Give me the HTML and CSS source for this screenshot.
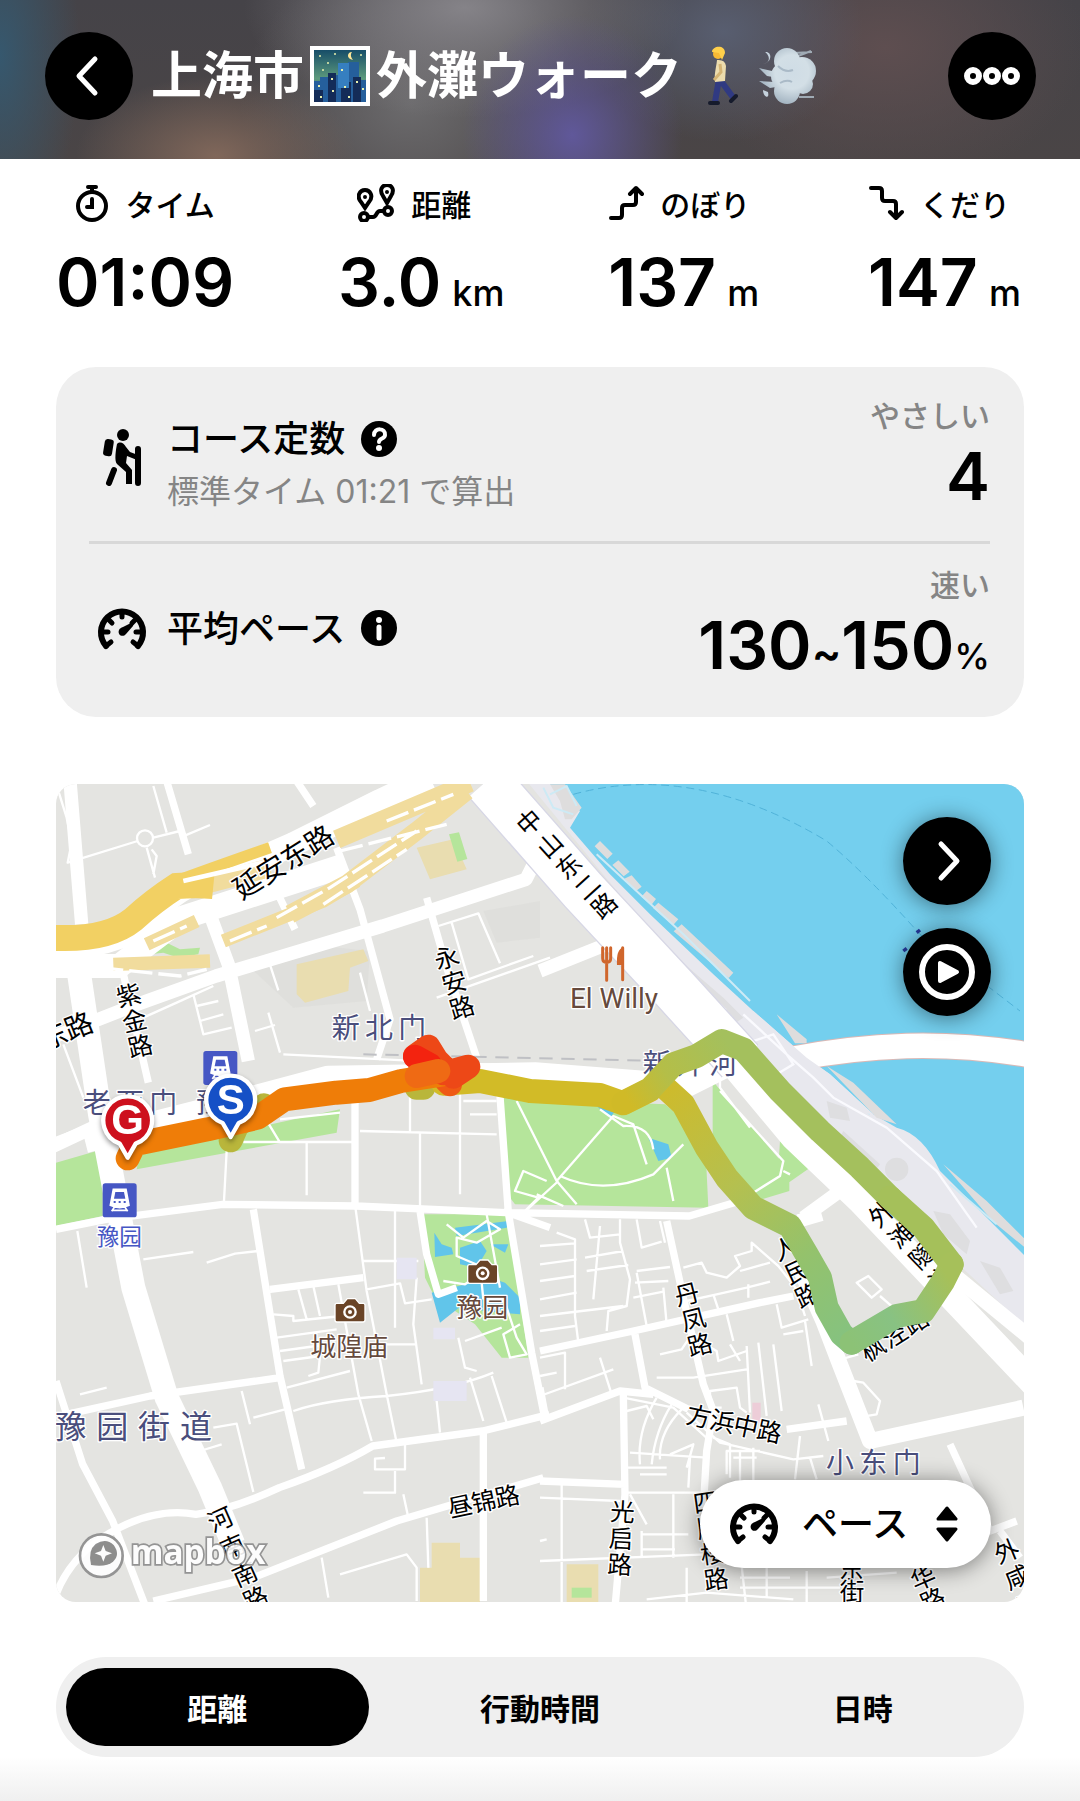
FILE: index.html
```html
<!DOCTYPE html>
<html lang="ja">
<head>
<meta charset="utf-8">
<meta name="viewport" content="width=device-width, initial-scale=1">
<title>上海市外灘ウォーク</title>
<link rel="stylesheet" href="styles.css">
</head>
<body>
<svg class="defs" width="0" height="0" aria-hidden="true">
  <defs>
    <symbol id="gauge" viewBox="0 0 50 44">
      <path d="M9 39A21 21 0 1 1 41 39" fill="none" stroke="currentColor" stroke-width="6" stroke-linecap="round"/>
      <path d="M25 5v5M11 12l4 4M39 12l-4 4M4 25h7M46 25h-7M9 39l5-4M41 39l-5-4" stroke="currentColor" stroke-width="5" stroke-linecap="round"/>
      <path d="M34 16c2-1 3 1 2 3l-7 8c-3 4-9 1-7-4 1-2 2-2 4-3z" fill="currentColor"/>
    </symbol>
  </defs>
</svg>

<header class="hero">
  <button class="round" type="button" aria-label="戻る">
    <svg width="88" height="88" viewBox="0 0 88 88"><path d="M50 27L34 44l16 17" fill="none" stroke="#fff" stroke-width="5" stroke-linecap="round" stroke-linejoin="round"/></svg>
  </button>
  <h1 class="title">
    <span>上海市</span>
    <svg class="night" width="60" height="60" viewBox="0 0 60 60" role="img" aria-label="夜景">
      <defs><linearGradient id="sky" x2="0" y2="1"><stop offset="0" stop-color="#164d68"/><stop offset=".55" stop-color="#5d9a7c"/><stop offset="1" stop-color="#1b3f63"/></linearGradient></defs>
      <path d="M0 0h60v60H0z" fill="#fff"/><path d="M4 4h52v52H4z" fill="url(#sky)"/>
      <path d="M4 35h6v-4h9v-2h9v9h7v-8h3V16h11v18h7v22H4z" fill="#255f9c"/>
      <path d="M18 27h8v29h-8zM31 36h10v20H31zM43 31h8v25h-8zM4 44h9v12H4z" fill="#142c58"/>
      <path d="M28 17h11v25H28z" fill="#367fc0"/>
      <path d="M42 6c-5 0-6 7 1 8-2-3-3-5-1-8z" fill="#ffe89a"/>
      <g fill="#e9f2ae"><circle cx="10" cy="10" r="1"/><circle cx="18" cy="17" r="1"/><circle cx="25" cy="8" r="1"/><circle cx="51" cy="9" r="1"/><circle cx="13" cy="24" r="1"/><path d="M21 32h2v2h-2zM8 39h2v2H8zM34 40h2v2h-2zM46 35h2v2h-2zM52 42h2v2h-2zM22 44h2v2h-2zM38 50h2v2h-2zM10 50h2v2h-2zM31 23h2v2h-2z"/></g>
    </svg>
    <span>外灘ウォーク</span>
    <svg class="walker" width="32" height="60" viewBox="0 0 32 60" role="img" aria-label="歩く人">
      <path d="M13 33l-4 23M15 35l11 15" stroke="#303a82" stroke-width="6" stroke-linecap="round" fill="none"/>
      <path d="M4 57h8M25 55l5-5" stroke="#161b2c" stroke-width="4" stroke-linecap="round"/>
      <path d="M11 14q8-1 9 6l-1 15-10 1c-1-8 1-13 2-22z" fill="#ecdcad"/>
      <path d="M14 18l1 8-7 8" stroke="#d4b474" stroke-width="3" fill="none"/>
      <circle cx="12" cy="8" r="5" fill="#f7b934"/><path d="M6 6c0-6 13-8 13 1l-3 7-3-7z" fill="#ffd04b"/>
    </svg>
    <svg class="gust" width="60" height="60" viewBox="0 0 60 60" role="img" aria-label="ダッシュ">
      <defs><radialGradient id="cloud" gradientUnits="userSpaceOnUse" cx="34" cy="26" r="34"><stop offset="0" stop-color="#cfdce5"/><stop offset=".5" stop-color="#d3dfe6"/><stop offset="1" stop-color="#9fb0be"/></radialGradient></defs>
      <path d="M36 7l18-1M40 10l13-5M41 51h15" stroke="#a0abb5" stroke-width="2"/>
      <g fill="url(#cloud)"><circle cx="29" cy="15" r="13"/><circle cx="44" cy="25" r="14"/><circle cx="29" cy="45" r="13"/><circle cx="27" cy="30" r="14"/><circle cx="45" cy="38" r="10"/><path d="M14 25L1 22l8 8 6 1M17 36L1 35l11 7 6-1"/></g>
      <path d="M5 18c9-2 6-9 2-12 7-1 8 10-2 12zM5 44c0 7 7 10 5 2z" fill="#c5d2dd"/>
      <path d="M20 20q7 7 15 4M22 37q7-4 12-1" fill="none" stroke="#aabac7" stroke-width="2"/>
    </svg>
  </h1>
  <button class="round" type="button" aria-label="メニュー">
    <svg width="88" height="88" viewBox="0 0 88 88" fill="none" stroke="#fff" stroke-width="6"><circle cx="25" cy="44" r="6"/><circle cx="44" cy="44" r="6"/><circle cx="63" cy="44" r="6"/></svg>
  </button>
</header>

<main class="page">
  <dl class="stats">
    <div class="stat">
      <dt><svg width="34" height="38" viewBox="0 0 34 38" fill="none" stroke="currentColor" stroke-width="4" stroke-linecap="round"><circle cx="17" cy="22" r="14"/><path d="M17 8V3M13 3h8M17 15v8h-5"/></svg>タイム</dt>
      <dd>01:09</dd>
    </div>
    <div class="stat">
      <dt><svg width="38" height="38" viewBox="0 0 38 38" fill="none" stroke="currentColor" stroke-width="4"><path d="M8 24l-4-6c-5-6-1-12 4-12s9 6 4 12zM30 19l-4-7c-4-6-1-11 4-11s8 5 4 11z"/><circle cx="8" cy="13" r="1" stroke-width="2"/><circle cx="30" cy="8" r="1" stroke-width="2"/><circle cx="7" cy="33" r="4"/><circle cx="31" cy="27" r="4"/><path d="M11 33h5c4 0 3-6 7-6h4"/></svg>距離</dt>
      <dd>3.0<small>km</small></dd>
    </div>
    <div class="stat">
      <dt><svg width="36" height="38" viewBox="0 0 36 38" fill="none" stroke="currentColor" stroke-width="4" stroke-linecap="round" stroke-linejoin="round"><path d="M3 34h8q3 0 3-3v-7q0-3 3-3h8q3 0 3-3V5M22 10l6-6 6 6"/></svg>のぼり</dt>
      <dd>137<small>m</small></dd>
    </div>
    <div class="stat">
      <dt><svg width="36" height="38" viewBox="0 0 36 38" fill="none" stroke="currentColor" stroke-width="4" stroke-linecap="round" stroke-linejoin="round"><path d="M3 4h8q3 0 3 3v7q0 3 3 3h8q3 0 3 3v13M22 28l6 6 6-6"/></svg>くだり</dt>
      <dd>147<small>m</small></dd>
    </div>
  </dl>

  <section class="card">
    <div class="metric course">
      <svg class="metric-icon" width="50" height="58" viewBox="0 0 50 58">
        <circle cx="26" cy="7" r="6"/><rect x="7" y="11" width="9" height="17" rx="3" transform="rotate(9 11 19)"/>
        <path d="M20 16c3-3 7-1 9 3l4 5 8 3-1 5-10-4-1 7 6 7v14h-6V44l-9-8c-3-3-1-15 0-20z"/>
        <path d="M17 42l-5 13M41 21v34" stroke="#000" stroke-width="6" stroke-linecap="round"/>
      </svg>
      <div class="metric-name">
        <h2>コース定数 <button class="info" type="button" aria-label="コース定数の説明"><svg width="37" height="37" viewBox="0 0 37 37"><circle cx="18" cy="18" r="18"/><path d="M13 14c0-8 12-7 11 0 0 4-6 3-6 7" fill="none" stroke="#fff" stroke-width="4" stroke-linecap="round"/><circle cx="18" cy="27" r="3" fill="#fff"/></svg></button></h2>
        <p>標準タイム 01:21 で算出</p>
      </div>
      <div class="metric-value"><span>やさしい</span><strong>4</strong></div>
    </div>
    <div class="metric average">
      <svg class="metric-icon" width="50" height="44"><use href="#gauge"/></svg>
      <div class="metric-name">
        <h2>平均ペース <button class="info" type="button" aria-label="平均ペースの説明"><svg width="37" height="37" viewBox="0 0 37 37"><circle cx="18" cy="18" r="18"/><circle cx="18" cy="10" r="3" fill="#fff"/><path d="M18 17v11" stroke="#fff" stroke-width="5" stroke-linecap="round"/></svg></button></h2>
      </div>
      <div class="metric-value"><span>速い</span><strong>130<i>~</i>150<small>%</small></strong></div>
    </div>
  </section>

  <section class="map" aria-label="地図">
    <svg class="map-art" viewBox="18 9 2904 2454">
      <path class="land" d="M0 0h2940v2480H0z"/>
      <!-- blocks and parks -->
      <g fill="#dcdcd8" opacity=".6"><path d="M1300 390l170-30v110l-130 15zM600 560l170-70 190 20-10 150-220 20z"/></g>
      <g fill="#e9ddb0"><path d="M740 550l200-45 15 35-55 20-5 70-130 35-25-25zM1100 200l110-25 40 90-110 30z"/><path d="M1145 2285h85v45h60v140h-180v-110h35zM1550 2350h95v120h-95z"/></g>
      <g class="park">
        <path d="M18 1145l140-40v200l-140 30zM270 1115l600-130-10 70-600 110zM1355 940l250 20 240 10 120 100 10 210-580-10-30-40zM1988 900l230 270v60l-100 30-130-150zM2190 1080l90 80-100 70z"/>
        <path d="M1115 1300h260l60 430h-80l-80-100-120-80-30-60zM1197 160l30-6 25 80-30 8zM290 490l60-5 40 20 60-5-5 20-60 10-45-15-40 5z"/><path d="M1565 2420h60v30h-60z"/>
      </g>
      <g fill="#61c5ea"><path d="M1153 1355l22 35 30 10 5 20-55 8zM1215 1340l160-20-5 20-150 25zM1230 1400l60-20 20 30-30 50-50-10zM1145 1535l120-30 40-20 60 20 45 45v50l-110-10-60-20-70 55zM1795 1070l60 20 10 40-40 10zM1640 975l60 10-20 25zM1320 1390l55 0-10 25z"/></g>
      <path d="M2107 1865h25v60h-25z" fill="#edcdd8"/>
      <!-- river and bank -->
      <path d="M1430 0l170 0 1340 1410v240L2200 960l-360-460z" fill="#e8e8ee"/>
      <path class="water" d="M1490 0L1590 90 1560 140 1680 280 1800 400 1990 580 2110 690 2270 830 2340 880 2470 1000 2540 1040Q2620 1060 2670 1170L2760 1260 2830 1330 2940 1440V0z"/>
      <g fill="#dedddd"><path d="M1500 10l30 50 15 55 20 0 30-35-50-70zM1650 180l38 38-16 16-38-38zM1705 238l34 34-18 14-34-34zM1745 283l30 34-18 14-34-38zM1790 330l28 24-14 18-30-25zM1825 365l60 50-16 18-60-52zM1895 430l155 145-14 16-165-140zM2180 700l90 75v12h-35zM2330 855l80 50 130 125-60-20zM2680 1150l130 110 120 120v24l-100-82z"/></g>
      <path d="M1480 20l30 60 60 20M1500 40l50-25 30 60M1640 220l260 240 200 200M2310 870l150 130M2700 1210l140 120" stroke="#cdeaf5" stroke-width="6" fill="none"/>
      <path d="M1570 40q360-100 760 140 120 100 280 280l300 230" fill="none" stroke="#50b2d8" stroke-width="3" stroke-dasharray="24 14"/>
      <path d="M2600 455l10-8M2560 510l10-8" stroke="#263a9c" stroke-width="10"/>
      <path d="M2220 835Q2400 800 2570 795 2750 790 2940 822" stroke="#dab9b6" stroke-width="80" fill="none"/>
      <path d="M2220 835Q2400 800 2570 795 2750 790 2940 822" stroke="#fff" stroke-width="74" fill="none"/>
      <path d="M2110 690l160 140 70 50 130 120-80-10-160-110-150-110z" fill="#e8e8ee"/>
      <g fill="#dedee0"><path d="M1800 460l220 190 60 60-30 20-220-190zM2330 960l60 20 10 40-60-10z"/><path d="M2380 1050l110 100-30 40-100-100z"/><circle cx="2540" cy="1165" r="35"/><path d="M2650 1290l50 10 60 80-10 40-70-60zM2790 1440l60 20 40 70-40 10z"/></g>
      <path d="M2080 700l130 120 80 70 60 60 160 90 150 130 120 170M2010 670l15 15-30 30M2080 790l90-30 60 90-50 30" fill="none" stroke="#fafafe" stroke-width="7"/>
      <!-- minor streets -->
      <g class="minor">
        <path d="M22 20l28 90 15 75-12 60 210-65M310 15l40 140M305 205l15 20-10 55M290 200l25 90M390 170l90-38M310 170l80-20"/><circle cx="285" cy="172" r="24"/>
        <path d="M590 570l115-35M650 520l35 108M615 750l60-18M655 695l35 120M930 575l30 115M1165 435l120-38 65 150M1205 425l50 170 195-70M1160 650l340-120M430 640l30 120 85-20M440 675l65-15M450 720l70-20M280 710l100-45 110-50M40 790l60 160"/>
        <path d="M18 1070l130-50M630 985l60 100M580 1083h335M770 1083v160M530 1110l-8 150M1080 940v115M1110 1055v220M1230 930v310M930 1050l410 10M1240 960h100M1260 1000h80M690 1015l180-20M700 820l800 40"/>
        <path d="M1400 960l120 240 60 70M1525 1200l-120 110 60-60-70-20 25-60 70 30M1520 1200l170-195 60 25 40 120M1530 1185q130 60 280-5l90-90M1460 1240l80 35M1850 1160l20 100M1650 985l70 50q80-5 90 70"/>
        <path d="M2010 930l190 210-10 45-80 50M2010 880v40l90 120M2200 1170l20 10"/>
        <path d="M82 1350l28 170M280 1435l150-22M470 1445l85-27 70-8M90 1840l80-20"/>
        <path d="M670 1600l60 5v15l145-15M745 1525l25 90M790 1515l20 90M865 1510l20 110 40 220 40 140M680 1670l180-25M690 1710l130-18M700 1740l110-15-5 50-30 10M710 1820l190-50M730 1890q100-35 280-45 200-20 320-70M915 1270l35 260 60 310 30 145M1035 1290v350M1100 1490l-10 140 25 180M940 1440h165M950 1525l100-18 15 60 80-12M1000 1690h100M1225 1670l20 90 35 10M1260 1790l40 130M1245 1680l110-40M1325 1785l45 140M1160 1860l10 95"/>
        <path d="M575 1830l25 100M610 1910l95-25M490 1940l70-12 50 205M450 2010l65-20M1065 1980v85h-90v-32l30-2M1035 2070v65h-95M1060 2140l15 70M1130 2210l5 150M870 2380l200-60 30 40v100M815 2330l20 120"/>
        <path d="M1190 1330l50 40 70-50 40 25-70 40-60-15v55l70 30 10 100M1180 1500l65 10 60-40M1310 1300l40 220M1360 1550l40 120 30 50-50 10-20-70 50-30"/>
      </g>
      <g class="minor" transform="translate(1470 1230)">
        <path d="M50 125l55 20v230l10 80M135 85l15 55 90-10M135 200l115-20M140 240l125-18M180 105l-20 220M240 85v70l30 110-10 80-55 15-5 60M290 85l15 85 60-18M290 240l100-12M285 275l100-5M280 320l90-18M360 90l15 65M0 165l105-8M0 220l110-15M0 270l105-15M0 325l110-20M0 375l250-30M0 420l105-15"/>
        <path d="M430 230l55-15 15 30 60 15 40-35-15-30 50-15 0-25 80 70 55 70 25 80M600 240l90-25M440 330l90-20 90-20 70-18M520 310l20 60M625 280v40M370 290l10 110M290 245l30 160M560 370l20 80M0 500l75-15v110M0 555l50-10M0 615l220-80M180 500l35 110M360 490l65-15 20-30 50 5M470 445l60 35 5 30 85-30M350 560h110l160-25M545 650h-35v-50l80-10 10 60 20 15M620 465l10 200M655 455l25 220M700 460l25 200M570 460l30 50M710 340l15 70 80-25M730 430l60-10M795 390l20 135M885 510l70-20M925 640l15-70 30 5 50 55-10 40-60 10M835 640l30 110"/>
        <path d="M250 620l150 30 110 100M260 660l60-15 20 40M350 620q-60 100-50 200M395 640q-50 80-60 180M425 655q-70 70-65 150M270 785l230 15M440 665l100 90 220 50 90-10M520 740l50 20v100M560 850v-70h100M600 780v110M640 770v100M580 800h70M780 735l-15 130M810 800l20 65M260 830h120M300 850h80M390 790l70-30-20 70M450 800l-5 90M260 905h360M65 880v380M270 910l50 90M0 920l240 10M400 910v190M305 1030h140M305 1075h100M305 1020v80M0 1050l20-5M0 1110l500-20M440 1130v120M600 1080l20 180M600 1160h150M600 1190h300M680 1110v110M800 1140v110M860 1160l210-15M320 1225l180-20 260 20"/>
        <path d="M985 255l40 40-30 25-45-45zM1020 315l40 35"/>
      </g>
      <!-- main streets -->
      <g class="road r20">
        <path d="M350 0l65 220M740 0l50 75M670 310l65 135M860 200l70 185 90 330-40 120M1130 350l60 210 90 270M210 535l85 370"/>
        <path d="M915 965v300M18 1345l150-30 350-45 400 5 450 20 550 10 170-50M1350 945l25 350 70 420 40 200M610 1285l80 500 65 280M50 1900l250-55 390-55M18 1800l80 250 90 170 100 260M18 2440q50-130 190-200 120-60 230-40 110-15 250-80 170-60 280-125l330-45 200-50M1300 1950v510M310 2460l300-70 430-170 440-130M660 1525l280-35M1500 1340l-140-50M1110 1290l20 130 35 120 55-20"/>
      </g>
      <g class="road r20" transform="translate(1470 1230)"><path d="M380 90l50 230 60 260 30 80-20 120-10 170M0 480l280-60 380-85 100-20M285 430l30 160 130 65M0 690l240-90 100 10M250 610l5 300-30 340M0 870l255 10M0 590l15 80M740 715l180-25M1230 760l120 260 80-30M1380 1020l60 80"/></g>
      <g class="road r36">
        <path d="M18 765l230-90 250-90 500-150 430-140 40-80M465 360l70 190 60 290M60 0l35 430M0 1100l150-70"/>
        <path d="M2260 1310l110-80 70-50M2245 1320l70-20M1470 570l250-100"/>
      </g>
      <g class="road r64">
        <path d="M18 555l190 0 90-70 100-75 480-155"/>
        <path d="M0 500q180 0 280-70 80-100 190-140 80-20 260-100l260-130 150-70"/>
        <path d="M80 530l70 470 50 260 50 260 100 330 130 270 70 170"/>
        <path d="M105 1080l430-110 300-80 620-10 450 35 220-110"/>
      </g>
      <g class="road r48" transform="translate(1470 1230)"><path d="M770 210l80 180 50 130 90 230 460-100"/></g>
      <path d="M1310 0l290 330 270 290 200 220" stroke="#d7d7e5" stroke-width="148" fill="none"/>
      <path d="M1310 0l290 330 270 290 200 220" stroke="#fff" stroke-width="140" fill="none"/>
      <path d="M2030 830l200 240 200 190 540 570" stroke="#fff" stroke-width="76" fill="none"/>
      <path d="M2660 1440l280 230" stroke="#fff" stroke-width="46"/>
      <path d="M940 820l900 20" stroke="#bfc0c4" stroke-width="6" stroke-dasharray="40 26"/>
      <!-- express road -->
      <g fill="none">
        <path d="M190 550l290-10M290 490l150-70M520 480l300-120 100-60" stroke="#f1dc9d" stroke-width="40"/>
        <path d="M860 175l260-110 140-60M720 400l170-90 210-160 150-120M470 310l190-50" stroke="#f1dc9d" stroke-width="56"/>
        <path d="M150 560l240 25 80-20M310 480l100-45M540 480l110-45M680 410l160-90 260-170M820 370l250-165M1010 120l200-80M870 210l320-80M510 380l120-35" stroke="#fff" stroke-width="10" stroke-dasharray="70 18"/>
        <path d="M0 470q140 5 220-40 90-60 160-130 80-30 280-100" stroke="#f2d063" stroke-width="34"/>
        <path d="M0 470q170 10 250-55 60-55 130-100 60-5 110 0" stroke="#f2d063" stroke-width="78"/>
        <path d="M400 300l260-60" stroke="#fff" stroke-width="14"/>
      </g>
      <g fill="#e6e5f2"><path d="M1040 1430h60v65h-60zM1150 1640h65v35h-65zM1150 1800h100v60h-100z"/></g>

      <!-- street names -->
      <g class="street">
        <text class="wide" transform="translate(574 358) rotate(-32)" x="0 84 168 252" y="0">延安东路</text>
        <text class="wide" transform="translate(18 795) rotate(-22)" x="-38 44" y="0">东路</text>
        <text class="stack" transform="translate(242 670) rotate(-13)" x="0 0 0" y="0 78 156">紫金路</text>
        <text class="stack" transform="translate(1198 556) rotate(-17)" x="0 0 0" y="0 78 156">永安路</text>
        <text class="stack" transform="translate(1456 144) rotate(-42)" x="0 0 0 0 0" y="0 92 178 260 336">中山东二路</text>
        <text class="stack" transform="translate(1918 1566) rotate(-14)" x="0 0 0" y="0 78 156">丹凤路</text>
        <text class="stack" transform="translate(2218 1426) rotate(-25)" x="0 0 0" y="0 78 156">人民路</text>
        <text class="stack" transform="translate(2512 1318) rotate(-44)" x="0 0 0 0" y="0 88 176 264">外滩隧道</text>
        <text transform="translate(2452 1745) rotate(-32)" x="0 76 152" y="0">枫泾路</text>
        <text transform="translate(1905 1925) rotate(12)" x="0 72 144 216" y="0">方浜中路</text>
        <text transform="translate(1200 2210) rotate(-12)" x="0 72 144" y="0">昼锦路</text>
        <text class="stack" transform="translate(1716 2220) rotate(3)" x="0 0 0" y="0 80 158">光启路</text>
        <text class="stack" transform="translate(522 2240) rotate(-24)" x="0 0 0 0" y="0 90 180 260">河南南路</text>
        <text class="stack" transform="translate(1970 2190) rotate(-8)" x="0 0 0 0" y="0 78 156 234">四牌楼路</text>
        <text class="stack" x="2404 2406" y="2392 2460">东街</text>
        <text class="stack" transform="translate(2630 2416) rotate(-24)" x="0 0" y="0 72">华路</text>
        <text class="stack" transform="translate(2880 2336) rotate(-22)" x="0 0 0" y="0 84 168">外咸瓜</text>
      </g>
      <g class="district">
        <text x="887 987 1087" y="772">新北门</text>
        <text x="140 240 340" y="995">老西门</text>
        <text x="480 565" y="995">豫园</text>
        <text x="1820 1920 2020" y="880">新开河</text>
        <text x="2370 2470 2570" y="2075">小东门</text>
        <text class="large" x="62 187 312 438" y="1972">豫园街道</text>
      </g>
      <!-- stations and places -->
      <g id="stations">
        <g id="station" transform="translate(460 810)"><rect width="102" height="102" rx="8" fill="#4657c4"/><path d="M32 18h38l9 48q-28 14-56 0zM27 84l8-12M75 84l-8-12M30 81h42" fill="#fff" stroke="#fff" stroke-width="5"/><path d="M38 26h26l4 20H34z" fill="#4657c4"/><path d="M33 56h6M48 56h6M63 56h6" stroke="#4657c4" stroke-width="6"/></g>
        <use href="#station" x="-302" y="397"/>
      </g>
      <text class="poi blue" x="208" y="1392">豫园</text>
      <g id="camera" transform="translate(855 1555)"><path d="M5 12h20l12-14h24l12 14h12q5 0 5 6v44q0 6-6 6H6q-6 0-6-6V18q0-6 5-6z" fill="#6a4427" stroke="#fff" stroke-width="4"/><circle cx="45" cy="38" r="17" fill="#6a4427" stroke="#fff" stroke-width="7"/><circle cx="45" cy="38" r="6" fill="#fff"/></g>
      <use href="#camera" x="398" y="-116"/>
      <text class="poi" x="898" y="1724">城隍庙</text>
      <text class="poi" x="1297" y="1609">豫园</text>
      <path d="M1658 500v32q0 12 12 12v54M1682 500v32q0 12-12 12M1670 500v44M1718 500v96" fill="none" stroke="#d0662c" stroke-width="9" stroke-linecap="round"/><path d="M1721 498v54h-20q-3-48 20-54z" fill="#d0662c"/>
      <text class="poi latin" x="1692" y="680">El Willy</text>
      <!-- recorded track -->
      <defs>
        <linearGradient id="loop" gradientUnits="userSpaceOnUse" x1="1800" y1="900" x2="2420" y2="1680"><stop offset="0" stop-color="#d1ba27"/><stop offset=".4" stop-color="#b5c04f"/><stop offset=".7" stop-color="#94c26c"/><stop offset="1" stop-color="#84c281"/></linearGradient>
        <linearGradient id="east" gradientUnits="userSpaceOnUse" x1="1730" y1="950" x2="2030" y2="780"><stop offset="0" stop-color="#d0ba27"/><stop offset=".4" stop-color="#b4be48"/><stop offset="1" stop-color="#a4c05d"/></linearGradient>
        <linearGradient id="south" gradientUnits="userSpaceOnUse" x1="2700" y1="1500" x2="2400" y2="1680"><stop offset="0" stop-color="#a6c05a"/><stop offset=".6" stop-color="#88c283"/><stop offset="1" stop-color="#8cc276"/></linearGradient>
      </defs>
      <g class="track">
        <path d="M542 1078l20-45 80-60M1100 920h20" stroke="#b9b63b"/>
        <path d="M1180 908l110-8 150 30 210 12 70 25 80-40" stroke="#d2bb27"/>
        <path d="M1840 915l60 55 70 130 60 90 80 90 110 55 50 85 40 70 20 90 45 80 30 25" stroke="url(#loop)"/>
        <path d="M1720 965l80-40 70-75 70-25 75-45 65 25 110 125 120 120 120 110 90 90" stroke="url(#east)"/>
        <path d="M2520 1250l100 90 85 110" stroke="#a5c05a"/>
        <path d="M2705 1450l-25 50-60 90-80 15-135 80" stroke="url(#south)"/>
        <path d="M1190 900l10 10" stroke="#ef5a14"/>
        <path d="M233 1132l20-42 220-45 150-35 80-55 155-20 100-8 95-27 125-20" stroke="#ef7d08"/>
        <path d="M1095 825l40-28 25 40 50 50 45-30-75 20" stroke="#ed4817"/>
        <path d="M1095 827l45 25" stroke="#f3230f"/>
        <path d="M1100 885l65-15" stroke="#ef6a14"/>
      </g>
      <!-- goal and start pins -->
      <g class="pin"><path d="M233 1130l-24-42a73 73 0 1 1 48 0z" fill="#cd101d"/><text x="233" y="1059">G</text></g>
      <g class="pin"><path d="M542 1068l-24-42a73 73 0 1 1 48 0z" fill="#1550c6"/><text x="542" y="999">S</text></g>
      <!-- map credit -->
      <g class="credit"><circle cx="154" cy="2324" r="64" fill="#fff" stroke="#8c8c8c" stroke-width="8"/><path d="M123 2352q-10-44 14-63 31-19 54 3 21 29-2 50-20 17-66 10z" fill="#858585"/><path d="M160 2292l7 18 19 7-19 7-7 18-7-18-19-7 19-7z" fill="#fff"/><text x="242" y="2350">mapbox</text></g>
    </svg>
    <div class="map-tools">
      <button class="round shade" type="button" aria-label="地図を開く"><svg width="88" height="88" viewBox="0 0 88 88"><path d="M38 27l16 17-16 17" fill="none" stroke="#fff" stroke-width="5" stroke-linecap="round" stroke-linejoin="round"/></svg></button>
      <button class="round shade" type="button" aria-label="再生"><svg width="88" height="88" viewBox="0 0 88 88"><circle cx="44" cy="44" r="25" fill="none" stroke="#fff" stroke-width="6"/><path d="M37 35v18l17-9z" fill="#fff" stroke="#fff" stroke-width="4" stroke-linejoin="round"/></svg></button>
    </div>
    <label class="pace">
      <svg width="50" height="44" aria-hidden="true"><use href="#gauge"/></svg>
      <select aria-label="表示する項目"><option>ペース</option></select>
      <svg width="24" height="38" viewBox="0 0 24 38" aria-hidden="true"><path d="M3 14L12 3l9 11zM3 24h18l-9 11z" stroke="#000" stroke-width="3" stroke-linejoin="round"/></svg>
    </label>
  </section>

  <div class="tabs" role="tablist">
    <button type="button" role="tab" aria-selected="true">距離</button>
    <button type="button" role="tab" aria-selected="false">行動時間</button>
    <button type="button" role="tab" aria-selected="false">日時</button>
  </div>
</main>
</body>
</html>
```
FILE: styles.css
```css
* { box-sizing: border-box; }

body {
  margin: 0;
  background: #fff;
  color: #000;
  font-family: Inter, "Noto Sans CJK JP", sans-serif;
}

button, select { font: inherit; color: inherit; }
button { border: 0; padding: 0; cursor: pointer; }
h1, h2, p, dl, dd { margin: 0; }
svg { display: block; flex: none; }
.defs { position: absolute; }

/* header */
.hero {
  display: flex;
  align-items: center;
  gap: 18px;
  padding: 32px 44px 39px 45px;
  background:
    radial-gradient(ellipse 110px 120px at 53% 85%, #60589a, transparent),
    radial-gradient(ellipse 140px 80px at 20% 98%, #80675a, transparent),
    radial-gradient(ellipse 220px 110px at 43% 5%, #858388, transparent),
    radial-gradient(ellipse 170px 150px at 38% 65%, #6c6b6d, transparent),
    radial-gradient(ellipse 80px 190px at 0 35%, #36586e, transparent),
    radial-gradient(ellipse 140px 110px at 67% 20%, #585e70, transparent),
    radial-gradient(ellipse 200px 140px at 82% 30%, #5e4e50, transparent),
    linear-gradient(#454348, #4a4546);
}

.round {
  flex: none;
  width: 88px;
  height: 88px;
  border-radius: 50%;
  background: #000;
}

.title {
  flex: 1;
  display: flex;
  align-items: center;
  gap: 6px;
  color: #fff;
  font-size: 51px;
  line-height: 72px;
  font-weight: 700;
  white-space: nowrap;
}
.walker { margin-left: 18px; }
.gust { margin-left: 14px; }

/* summary */
.page {
  padding: 22px 56px 45px;
  background: linear-gradient(to top, #efefef, #fff 45px);
}

.stats { display: flex; justify-content: space-between; }
.stat dt {
  display: flex;
  align-items: center;
  justify-content: center;
  gap: 16px;
  height: 44px;
  font-size: 30px;
  font-weight: 500;
}
.stat + .stat dt { padding-right: 14px; }
.stat dd {
  display: flex;
  align-items: baseline;
  gap: 11px;
  margin-top: 17px;
  font-size: 66px;
  line-height: 80px;
  font-weight: 600;
}
.stat small { font-size: 36px; font-weight: 500; }

.card {
  margin-top: 34px;
  padding: 0 34px 0 33px;
  border-radius: 40px;
  background: #efefef;
}
.metric {
  display: flex;
  align-items: center;
  gap: 20px;
  height: 174px;
  padding-left: 8px;
}
.course .metric-name { padding-top: 20px; }
.course .metric-icon { margin-top: 6px; }
.average { height: 176px; padding-bottom: 4px; border-top: 3px solid #d8d8d8; }
.metric-name { flex: 1; }
.metric-name h2 {
  display: flex;
  align-items: center;
  gap: 16px;
  font-size: 36px;
  line-height: 50px;
  font-weight: 500;
}
.metric-name p { margin-top: 6px; color: #858585; font-size: 32px; line-height: 44px; }
.info { background: none; }
.metric-value { text-align: right; }
.metric-value span { display: block; color: #858585; font-size: 30px; line-height: 44px; font-weight: 500; }
.metric-value strong { display: block; font-size: 66px; line-height: 76px; font-weight: 600; }
.metric-value i { font-size: 44px; font-style: normal; }
.metric-value small { font-size: 36px; font-weight: 500; }

/* map */
.map {
  position: relative;
  margin-top: 67px;
  border-radius: 20px;
  overflow: hidden;
}
.map-art { width: 100%; height: auto; }
.land { fill: #e4e4e1; }
.water { fill: #74cfee; }
.park { fill: #b5e59b; }
.minor { fill: none; stroke: #fff; stroke-width: 7; stroke-linejoin: round; }
.road { fill: none; stroke: #fff; stroke-linejoin: round; }
.r20 { stroke-width: 22; }
.r36 { stroke-width: 40; }
.r48 { stroke-width: 48; }
.r64 { stroke-width: 72; }

.street, .district, .poi {
  font-family: "Noto Sans CJK SC", sans-serif;
  paint-order: stroke;
  stroke: #fff;
  stroke-width: 8px;
  stroke-linejoin: round;
}
.street { font-size: 74px; fill: #000; }
.wide { font-size: 84px; }
.stack { text-anchor: middle; }
.district { font-size: 84px; fill: #4a4e7c; text-anchor: middle; }
.district .large { font-size: 96px; }
.poi { font-size: 78px; fill: #664a3d; text-anchor: middle; }
.blue { font-size: 68px; fill: #4657c4; }
.latin { font-family: Roboto, sans-serif; font-size: 84px; }

.track { fill: none; stroke-width: 72px; stroke-linecap: round; stroke-linejoin: round; }
.pin { filter: drop-shadow(0 8px 8px #0006); }
.pin path { stroke: #fff; stroke-width: 13px; stroke-linejoin: round; }
.pin text { fill: #fff; font: 700 126px "Liberation Sans", sans-serif; text-anchor: middle; }
.credit { opacity: .9; }
.credit text {
  font: 700 100px "Open Sans", sans-serif;
  fill: #fff;
  stroke: #8c8c8c;
  stroke-width: 10px;
  paint-order: stroke;
}

.map-tools {
  position: absolute;
  top: 33px;
  right: 33px;
  display: grid;
  gap: 23px;
}
.shade, .pace { box-shadow: 0 2px 22px #0007; }
.pace {
  position: absolute;
  right: 33px;
  bottom: 34px;
  display: flex;
  align-items: center;
  gap: 23px;
  height: 88px;
  padding: 0 32px 0 29px;
  border-radius: 44px;
  background: #fff;
}
.pace select {
  appearance: none;
  width: 110px;
  padding: 0;
  border: 0;
  background: none;
  font-size: 36px;
  line-height: 52px;
  font-weight: 500;
}

/* chart axis switch */
.tabs {
  display: grid;
  grid-template-columns: repeat(3, 1fr);
  gap: 20px;
  margin-top: 55px;
  padding: 11px 10px;
  border-radius: 50px;
  background: #efefef;
}
.tabs button {
  height: 78px;
  border-radius: 39px;
  background: none;
  font-size: 30px;
  font-weight: 700;
}
.tabs button[aria-selected="true"] { background: #000; color: #fff; }
```
